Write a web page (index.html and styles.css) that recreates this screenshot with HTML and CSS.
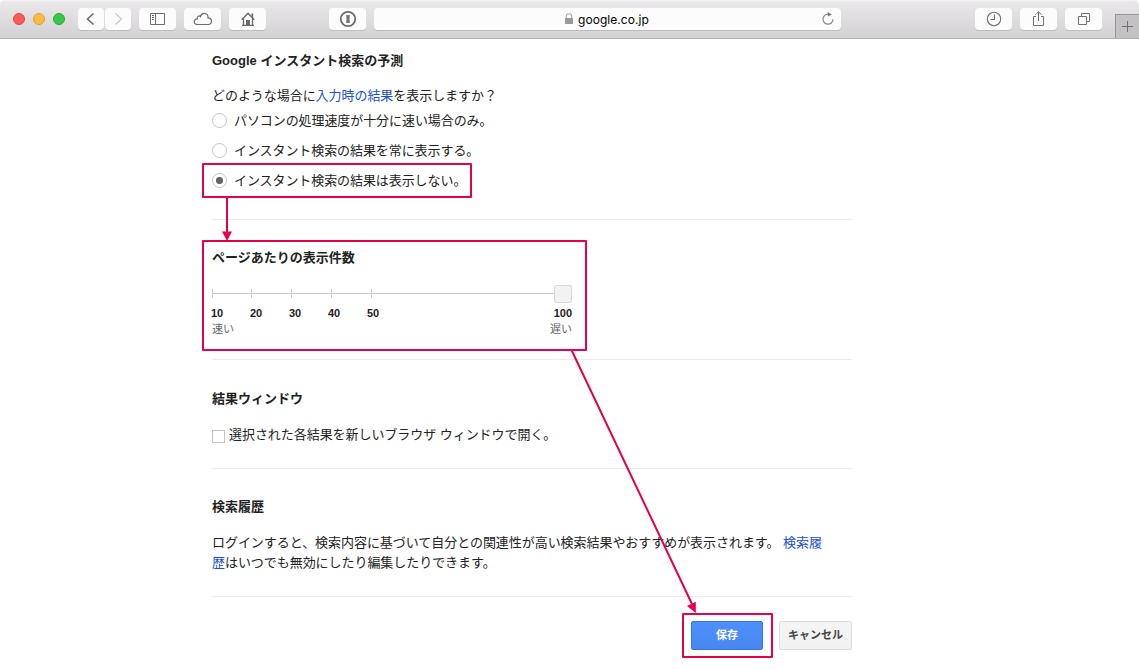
FILE: index.html
```html
<!DOCTYPE html>
<html lang="ja">
<head>
<meta charset="utf-8">
<title>検索の設定</title>
<link rel="stylesheet" href="styles.css">
</head>
<body>
<div class="window">
  <header class="toolbar">
    <div class="lights"><span class="light red"></span><span class="light yellow"></span><span class="light green"></span></div>
    <div class="nav">
      <span class="btn half"><svg width="26" height="22" viewBox="0 0 26 22"><path d="M15.500 5.500 9.500 11l6 5.500" fill="none" stroke="#666" stroke-width="1.500"/></svg></span>
      <span class="btn half"><svg width="26" height="22" viewBox="0 0 26 22"><path d="M10.500 5.500l6 5.500-6 5.500" fill="none" stroke="#ccc" stroke-width="1.300"/></svg></span>
    </div>
    <span class="btn"><svg width="37" height="22" viewBox="0 0 37 22"><g fill="none" stroke="#6b6b6b"><path d="M11.500 5.500h14v11h-14zM16.500 5.500v11M13 7.500h2M13 9.500h2M13 11.500h2"/></g></svg></span>
    <span class="btn"><svg width="37" height="22" viewBox="0 0 37 22"><path d="M14 16.500c-5 0-4.700-5.500-.8-5.600-.4-2.900 2.300-3.600 3.200-2.300 1.300-4.700 8-3.900 7.600 1.200 4.600 0 4.700 6.700.3 6.700z" fill="none" stroke="#6b6b6b" stroke-width="1.200"/></svg></span>
    <span class="btn"><svg width="37" height="22" viewBox="0 0 37 22"><g fill="none" stroke="#6b6b6b" stroke-width="1.300"><path d="M12.700 11.700 19 5.200l6.300 6.500M14.500 10v7.300M23.500 10v7.300M13 17.300h12"/><path d="M23.300 5.500v4" stroke-width="1.800"/></g><path d="M17 12h4v5.500h-4z" fill="#6b6b6b"/></svg></span>
    <span class="btn password"><svg width="37" height="22" viewBox="0 0 37 22"><circle cx="19" cy="11" r="7.200" fill="none" stroke="#6b6b6b" stroke-width="1.800"/><path d="M17.300 7h3.400v3.400l-.7.600.7.700V15h-3.400v-3.300l.7-.7-.7-.6z" fill="#747474"/></svg></span>
    <div class="address">
      <svg class="lock" width="10" height="12" viewBox="0 0 10 12"><path d="M2.300 6V3.500a2.700 2.700 0 0 1 5.400 0V6" fill="none" stroke="#aaa" stroke-width="1.100"/><rect x="1" y="5" width="8" height="6" rx=".5" fill="#999"/></svg>
      <span class="host">google.co.jp</span>
      <svg class="reload" width="14" height="14" viewBox="0 0 14 14"><path d="M7 2.200a5 5 0 1 0 5 5" fill="none" stroke="#858585" stroke-width="1.200"/><path d="M6.800 0v4.600L10.800 2.400z" fill="#777"/></svg>
    </div>
    <div class="tools">
      <span class="btn"><svg width="37" height="22" viewBox="0 0 37 22"><g fill="none" stroke="#707070" stroke-width="1.100"><circle cx="19" cy="11" r="6.700"/><path d="M19.500 6.500v5h-4"/></g></svg></span>
      <span class="btn"><svg width="37" height="22" viewBox="0 0 37 22"><path d="M16 8.500h-2.500v9h10v-9H21M18.500 13V3.700M15.500 6.700l3-3 3 3" fill="none" stroke="#707070"/></svg></span>
      <span class="btn"><svg width="37" height="22" viewBox="0 0 37 22"><path d="M13.500 8.500h8v8h-8zM16.500 8V5.500h8v8H22" fill="none" stroke="#707070"/></svg></span>
    </div>
    <span class="new-tab"><svg width="23" height="24" viewBox="0 0 23 24"><path d="M6 11.500h11M11.500 6v11" stroke="#727272" fill="none"/></svg></span>
  </header>

  <main class="settings">
    <section class="instant">
      <h2>Google インスタント検索の予測</h2>
      <p>どのような場合に<a>入力時の結果</a>を表示しますか？</p>
      <div class="option"><span class="radio"></span>パソコンの処理速度が十分に速い場合のみ。</div>
      <div class="option"><span class="radio"></span>インスタント検索の結果を常に表示する。</div>
      <div class="option"><span class="radio checked"></span>インスタント検索の結果は表示しない。</div>
    </section>
    <section class="count">
      <h2>ページあたりの表示件数</h2>
      <div class="slider">
        <svg class="track" width="342" height="18" viewBox="0 0 342 18"><path d="M0 8.500h342M.5 4v9M39.500 4v9M79.500 4v9M119.500 4v9M159.500 4v9" stroke="#ccc" fill="none"/></svg>
        <span class="thumb"></span>
      </div>
      <div class="scale"><b>10</b><b>20</b><b>30</b><b>40</b><b>50</b><b class="last">100</b></div>
      <div class="speed"><span>速い</span><span>遅い</span></div>
    </section>
    <section class="results">
      <h2>結果ウィンドウ</h2>
      <div class="check"><span class="box"></span>選択された各結果を新しいブラウザ ウィンドウで開く。</div>
    </section>
    <section class="history">
      <h2>検索履歴</h2>
      <p>ログインすると、検索内容に基づいて自分との関連性が高い検索結果やおすすめが表示されます。 <a>検索履<br>歴</a>はいつでも無効にしたり編集したりできます。</p>
    </section>
    <div class="actions"><span class="save">保存</span><span class="cancel">キャンセル</span></div>
  </main>

  <svg class="guide" width="1139" height="669" viewBox="0 0 1139 669">
    <g fill="none" stroke="#e2004f" stroke-width="2" stroke-linejoin="round">
      <rect x="203" y="164" width="268" height="33"/>
      <rect x="203" y="241" width="383" height="109"/>
      <rect x="683" y="614" width="89" height="43"/>
      <path d="M227 197v36M571.500 350 692 604"/>
    </g>
    <path d="M222 231.500h10L227 241zM687 606l8.800-4.300V613z" fill="#e2004f"/>
  </svg>
</div>
</body>
</html>
```
FILE: styles.css
```css
* { box-sizing: border-box; }
body { margin: 0; background: #fff; }
.window {
  position: relative;
  width: 1139px;
  height: 669px;
  overflow: hidden;
  background: #fff;
  color: #222;
  font: 13px/20px "Liberation Sans", "Noto Sans CJK JP", sans-serif;
}
svg { display: block; }

.toolbar {
  display: flex;
  gap: 8px;
  height: 39px;
  padding: 8px 0 0 13px;
  background: linear-gradient(#f5f4f5 0, #e9e7e9 2px, #d3d1d3 38px);
  border-bottom: 1px solid #b1b0b1;
  border-radius: 5px 5px 0 0;
}
.lights { display: flex; gap: 8px; width: 57px; padding-top: 5px; }
.light { width: 12px; height: 12px; border-radius: 50%; border: 1px solid; }
.red { background: #fc5b57; border-color: #e2443f; }
.yellow { background: #fdbc40; border-color: #e0a033; }
.green { background: #34c84a; border-color: #27aa35; }
.nav { display: flex; gap: 1px; }
.btn {
  width: 37px;
  height: 22px;
  background: #fcfcfc;
  border-radius: 4px;
  box-shadow: 0 1px 0 #bfbdbf;
}
.half { width: 26px; }
.password { margin-left: 55px; }
.address {
  display: flex;
  align-items: center;
  width: 467px;
  height: 22px;
  padding: 0 6px 0 190px;
  background: #fcfcfc;
  border-radius: 4px;
  box-shadow: 0 1px 0 #bfbdbf;
}
.host { margin-left: 4px; padding-top: 2px; color: #000; font: 12px/22px Inter, sans-serif; letter-spacing: 0.05px; }
.reload { margin-left: auto; }
.tools { display: flex; gap: 8px; margin-left: 126px; }
.new-tab {
  width: 24px;
  height: 24px;
  margin: 6px 0 0 5px;
  background: #c3c1c3;
  border: solid #979597;
  border-width: 1px 0 0 1px;
}

.settings { width: 640px; margin-left: 212px; }
section { border-bottom: 1px solid #ebebeb; }
h2 { margin: 0; font-size: 13px; line-height: 20px; font-weight: bold; }
p { margin: 0; white-space: nowrap; letter-spacing: -0.05px; }
a { color: #1a4fc9; }
.instant { height: 181px; padding-top: 12px; }
.instant p { margin-top: 15px; }
.option { display: flex; align-items: center; height: 30px; letter-spacing: -0.08px; }
.radio {
  width: 15px;
  height: 15px;
  margin: 0 7px 1px 0;
  border: 1px solid #c3c3c3;
  border-radius: 50%;
}
.checked { background: radial-gradient(circle, #666 3.200px, transparent 4px); }

.count { height: 140px; padding-top: 28px; }
.slider { display: flex; width: 360px; height: 18px; margin-top: 17px; }
.thumb {
  width: 18px;
  height: 18px;
  background: #f2f2f2;
  border: 1px solid #d8d8d8;
  border-radius: 2px;
}
.scale { display: flex; width: 361px; margin-left: -1px; font-size: 11px; line-height: 20px; }
.scale b { width: 39px; }
.scale .last { width: auto; margin-left: auto; }
.speed {
  display: flex;
  justify-content: space-between;
  width: 360px;
  margin-top: -2px;
  color: #666;
  font-size: 11px;
  line-height: 16px;
}

.results { height: 109px; padding-top: 29px; }
.check { display: flex; align-items: center; height: 20px; margin-top: 16px; letter-spacing: -0.05px; }
.box { width: 13px; height: 13px; margin: 3px 4px 0 0; border: 1px solid #c3c3c3; }

.history { height: 128px; padding-top: 28px; }
.history p { margin-top: 16px; }

.actions { display: flex; justify-content: flex-end; gap: 16px; padding-top: 24px; }
.actions span {
  height: 29px;
  border: 1px solid;
  border-radius: 2px;
  font-size: 11px;
  font-weight: bold;
  line-height: 27px;
  text-align: center;
}
.actions .save { width: 72px; color: #fff; background: linear-gradient(#4d90fe, #4787ed); border-color: #3079ed; }
.actions .cancel { width: 73px; color: #444; background: linear-gradient(#f5f5f5, #f1f1f1); border-color: #dcdcdc; }

.guide { position: absolute; inset: 0; }
```
